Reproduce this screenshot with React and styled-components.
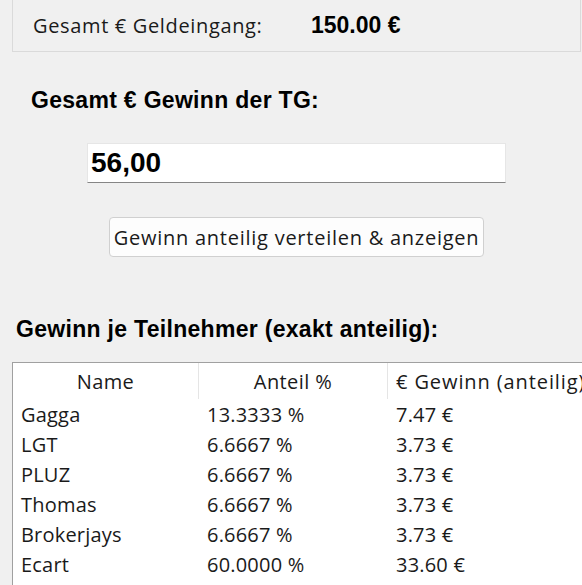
import React from 'react';
import styled, { createGlobalStyle } from 'styled-components';

const GlobalStyle = createGlobalStyle`
  html, body {
    margin: 0;
    padding: 0;
    background: #f0f0f0;
    overflow: hidden;
  }
  body {
    font-family: "Open Sans", "Noto Sans", sans-serif;
    color: #000;
  }
`;

const Page = styled.div`
  width: 569px;
  margin-left: 12px;
  height: 585px;
  display: flex;
  flex-direction: column;
`;

const SummaryPanel = styled.div`
  height: 52px;
  box-sizing: border-box;
  border: 1px solid #dadada;
  border-top: none;
  display: grid;
  grid-template-columns: 278px 1fr;
  align-items: center;
  padding-left: 20px;
`;

const SummaryLabel = styled.span`
  font-size: 20px;
  letter-spacing: 0.65px;
  color: #1a1a1a;
`;

const SummaryValue = styled.span`
  font-family: "Liberation Sans", Arial, sans-serif;
  font-weight: bold;
  font-size: 23px;
`;

const Heading = styled.div`
  font-family: "Liberation Sans", Arial, sans-serif;
  font-weight: bold;
  font-size: 23px;
  letter-spacing: 0.3px;
  margin-top: ${({ $top }) => $top}px;
  padding-left: ${({ $indent }) => $indent}px;
`;

const AmountInput = styled.input`
  align-self: center;
  width: 419px;
  height: 40px;
  box-sizing: border-box;
  margin-top: 29px;
  border: 1px solid #e6e6e6;
  border-bottom: 1px solid #868686;
  background: #fff;
  padding: 0 3px;
  font-family: "Liberation Sans", Arial, sans-serif;
  font-weight: bold;
  font-size: 28px;
  color: #000;
  outline: none;
`;

const ActionButton = styled.button`
  align-self: center;
  width: 375px;
  height: 40px;
  box-sizing: border-box;
  margin-top: 34px;
  border: 1px solid #d0d0d0;
  border-radius: 4px;
  background: #fdfdfd;
  font-family: "Open Sans", "Noto Sans", sans-serif;
  font-size: 20px;
  letter-spacing: 0.75px;
  color: #1a1a1a;
  padding: 0;
  white-space: nowrap;
`;

const Table = styled.div`
  margin-top: 19px;
  width: 640px;
  flex: 1;
  background: #fff;
  border: 1px solid #a0a0a0;
  border-right: none;
  border-bottom: none;
  box-sizing: border-box;
`;

const HeaderRow = styled.div`
  display: grid;
  grid-template-columns: 186px 189px 1fr;
  height: 36px;
`;

const HeaderCell = styled.div`
  display: flex;
  align-items: center;
  justify-content: ${({ $left }) => ($left ? 'flex-start' : 'center')};
  padding-left: ${({ $left }) => ($left ? '8px' : '0')};
  font-size: 20px;
  letter-spacing: ${({ $left }) => ($left ? '0.9px' : '0.4px')};
  color: #1a1a1a;
  white-space: nowrap;
  border-right: 1px solid #e5e5e5;
`;

const Row = styled.div`
  display: grid;
  grid-template-columns: 186px 189px 1fr;
  height: 30px;
  align-items: center;
  &:first-of-type {
    margin-top: 1px;
  }
`;

const Cell = styled.div`
  padding-left: 8px;
  font-size: 20px;
  letter-spacing: 0.2px;
  line-height: 30px;
  color: #1a1a1a;
  white-space: nowrap;
`;

const rows = [
  ['Gagga', '13.3333 %', '7.47 €'],
  ['LGT', '6.6667 %', '3.73 €'],
  ['PLUZ', '6.6667 %', '3.73 €'],
  ['Thomas', '6.6667 %', '3.73 €'],
  ['Brokerjays', '6.6667 %', '3.73 €'],
  ['Ecart', '60.0000 %', '33.60 €'],
];

export default function App() {
  return (
    <>
      <GlobalStyle />
      <Page>
        <SummaryPanel>
          <SummaryLabel>Gesamt € Geldeingang:</SummaryLabel>
          <SummaryValue>150.00 €</SummaryValue>
        </SummaryPanel>

        <Heading $top={35} $indent={19}>Gesamt € Gewinn der TG:</Heading>
        <AmountInput defaultValue="56,00" />
        <ActionButton>Gewinn anteilig verteilen &amp; anzeigen</ActionButton>

        <Heading $top={59} $indent={4}>Gewinn je Teilnehmer (exakt anteilig):</Heading>

        <Table>
          <HeaderRow>
            <HeaderCell>Name</HeaderCell>
            <HeaderCell>Anteil %</HeaderCell>
            <HeaderCell $left>€ Gewinn (anteilig)</HeaderCell>
          </HeaderRow>
          <div>
            {rows.map(([name, share, win]) => (
              <Row key={name}>
                <Cell>{name}</Cell>
                <Cell>{share}</Cell>
                <Cell>{win}</Cell>
              </Row>
            ))}
          </div>
        </Table>
      </Page>
    </>
  );
}
